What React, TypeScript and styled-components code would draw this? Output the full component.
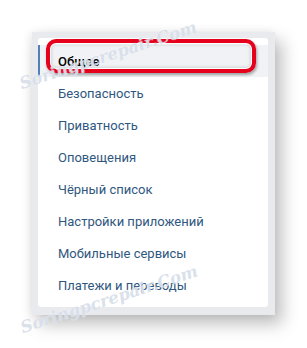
import React from "react";
import styled, { createGlobalStyle } from "styled-components";

const Global = createGlobalStyle`
  html, body { margin: 0; padding: 0; background: #ffffff; }
  body { font-family: Roboto, "Open Sans", Arial, sans-serif; }
`;

const Page = styled.div`
  position: relative;
  width: 307px;
  height: 348px;
  overflow: hidden;
  background: #ffffff;
  padding: 32px 0 0 32px;
  box-sizing: border-box;
`;

const Frame = styled.div`
  width: 243px;
  box-sizing: border-box;
  padding: 6px 7px 8px 6px;
  background: #e9eaee;
  box-shadow: 7px 9px 16px rgba(0, 0, 0, 0.26), -2px 0 8px rgba(0, 0, 0, 0.07);
`;

const Card = styled.nav`
  background: #ffffff;
  border-radius: 3px;
  padding: 7px 0 6px;
  display: flex;
  flex-direction: column;
`;

const Item = styled.div<{ $active?: boolean }>`
  height: 32px;
  display: flex;
  align-items: center;
  padding-left: ${(p) => (p.$active ? "18px" : "20px")};
  border-left: ${(p) => (p.$active ? "2px solid #5181b8" : "none")};
  background: ${(p) => (p.$active ? "#f0f2f5" : "transparent")};
  color: ${(p) => (p.$active ? "#000000" : "#2f5780")};
  font-size: 13px;
  font-weight: ${(p) => (p.$active ? 500 : 400)};
  white-space: nowrap;
`;

const Highlight = styled.div`
  position: absolute;
  left: 46px;
  top: 39px;
  width: 210px;
  height: 34px;
  box-sizing: border-box;
  border: 4px solid #e5001c;
  border-radius: 10px;
  box-shadow: inset 0 0 0 1px #ffffff, inset 0 0 3px 2px rgba(0,0,0,0.12), 1px 2px 3px rgba(0, 0, 0, 0.35);
  pointer-events: none;
`;

const Watermark = styled.div<{ $x: number; $y: number }>`
  position: absolute;
  left: ${(p) => p.$x}px;
  top: ${(p) => p.$y}px;
  transform: rotate(-18deg);
  transform-origin: left bottom;
  font-family: "DejaVu Serif", serif;
  font-style: italic;
  font-weight: bold;
  font-size: 16.5px;
  color: rgba(196, 207, 224, 0.65);
  text-shadow: 0 0 1px rgba(255,255,255,0.9);
  white-space: nowrap;
  pointer-events: none;
`;

const items = [
  "Общее",
  "Безопасность",
  "Приватность",
  "Оповещения",
  "Чёрный список",
  "Настройки приложений",
  "Мобильные сервисы",
  "Платежи и переводы",
];

export default function App() {
  return (
    <>
      <Global />
      <Page>
        <Frame>
          <Card>
            {items.map((t, i) => (
              <Item key={t} $active={i === 0}>
                {t}
              </Item>
            ))}
          </Card>
        </Frame>
        <Highlight />
        <Watermark $x={23} $y={74}>Soringpcrepair.Com</Watermark>
        <Watermark $x={24} $y={318}>Soringpcrepair.Com</Watermark>
      </Page>
    </>
  );
}
